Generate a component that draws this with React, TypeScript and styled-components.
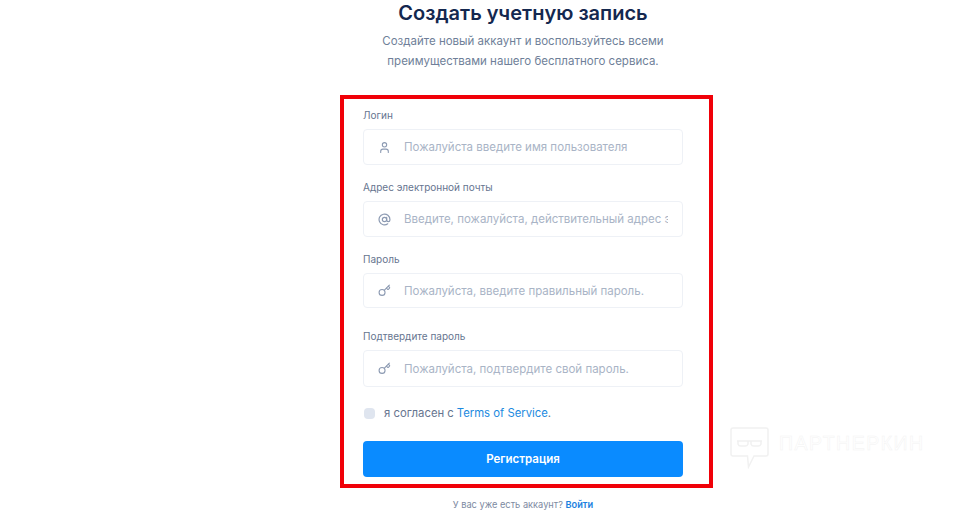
import React from 'react'
import styled, { createGlobalStyle } from 'styled-components'
import { AtSign, Key, User } from 'lucide-react'

const GlobalStyle = createGlobalStyle`
html, body {
  margin: 0;
  padding: 0;
  background: #ffffff;
}
body {
  font-family: "Inter", "Liberation Sans", sans-serif;
}
`;
const Page = styled.div`
position: relative;
width: 974px;
height: 520px;
overflow: hidden;
padding-left: 340px;
box-sizing: border-box;
`;
const Column = styled.div`
width: 373px;
`;
const Header = styled.div`
width: 366px;
text-align: center;
`;
const Title = styled.h1`
margin: 0;
font-size: 20px;
line-height: 26px;
font-weight: 600;
color: #14284f;
`;
const Subtitle = styled.p`
margin: 6px 0 0;
font-size: 11.5px;
line-height: 19.5px;
color: #6f7f99;
`;
const Frame = styled.form`
margin-top: 24px;
height: 393px;
box-sizing: border-box;
border: 4px solid #f00008;
padding: 9px 26px 0 19px;
`;
const Field = styled.div<{ $gap: number }>`
margin-bottom: ${(p) => p.$gap}px;
`;
const Label = styled.label`
display: block;
font-size: 10px;
line-height: 14px;
color: #66758f;
margin-bottom: 7px;
`;
const InputWrap = styled.div<{ $height: number }>`
display: flex;
align-items: center;
height: ${(p) => p.$height}px;
box-sizing: border-box;
border: 1px solid #eef1f6;
border-radius: 4px;
padding: 0 14px 0 14px;
`;
const IconSlot = styled.span`
display: flex;
width: 14px;
margin-right: 12px;
color: #8c9ab2;
`;
const TextInput = styled.input`
flex: 1;
min-width: 0;
border: 0;
padding: 0;
outline: none;
background: transparent;
font-family: inherit;
font-size: 11.5px;
&::placeholder {
  color: #a9b4c6;
  opacity: 1;
}
`;
const AgreeRow = styled.div`
display: flex;
align-items: center;
margin-bottom: 20px;
font-size: 11.3px;
line-height: 16px;
color: #66758f;
`;
const Check = styled.span`
width: 11px;
height: 11px;
margin: 0 9px 0 1px;
border-radius: 4px;
background: #dfe5ef;
`;
const Link = styled.a`
color: #1b8ae0;
margin-left: 3px;
`;
const Submit = styled.button`
display: block;
width: 100%;
height: 36px;
border: 0;
border-radius: 4px;
background: #0a8bff;
color: #ffffff;
font-family: inherit;
font-size: 11.5px;
font-weight: 600;
`;
const Footer = styled.p`
width: 366px;
margin: 10px 0 0;
text-align: center;
font-size: 9.25px;
line-height: 14px;
color: #7d8aa1;
`;
const SignIn = styled.a`
color: #1b7fe0;
font-weight: 600;
`;
const Watermark = styled.div`
position: absolute;
left: 730px;
top: 427px;
display: flex;
align-items: flex-start;
gap: 10px;
`;
const WatermarkText = styled.span`
margin-top: 6px;
font-family: "Liberation Sans", sans-serif;
font-size: 19.5px;
line-height: 20px;
letter-spacing: 1.5px;
color: #ffffff;
-webkit-text-stroke: 0.5px #f3f3f3;
`;

const Logo = () => (
  <svg width="39" height="42" viewBox="0 0 39 42" fill="none" stroke="#f1f1f1" strokeWidth="1.5">
    <path d="M3 1h33a2 2 0 0 1 2 2v24a2 2 0 0 1-2 2H24l-5.500 11-1-11H3a2 2 0 0 1-2-2V3a2 2 0 0 1 2-2z" />
    <path d="M7 14h25M8 14v3a3 3 0 0 0 3 2h4a3 3 0 0 0 3-2v-3M21 14v3a3 3 0 0 0 3 2h4a3 3 0 0 0 3-2v-3" />
  </svg>
)

const fields = [
  { label: 'Логин', placeholder: 'Пожалуйста введите имя пользователя', icon: <User size={13} strokeWidth={2} />, height: 36, gap: 15, type: 'text' },
  { label: 'Адрес электронной почты', placeholder: 'Введите, пожалуйста, действительный адрес электронной почты', icon: <AtSign size={13} strokeWidth={2.2} />, height: 36, gap: 15, type: 'email' },
  { label: 'Пароль', placeholder: 'Пожалуйста, введите правильный пароль.', icon: <Key size={13} strokeWidth={2} />, height: 35, gap: 21, type: 'password' },
  { label: 'Подтвердите пароль', placeholder: 'Пожалуйста, подтвердите свой пароль.', icon: <Key size={13} strokeWidth={2} />, height: 37, gap: 18, type: 'password' },
]

const App = () => {
  return (
    <Page>
      <GlobalStyle />
      <Column>
        <Header>
          <Title>Создать учетную запись</Title>
          <Subtitle>
            Создайте новый аккаунт и воспользуйтесь всеми
            <br />
            преимуществами нашего бесплатного сервиса.
          </Subtitle>
        </Header>
        <Frame>
          {fields.map((f) => (
            <Field key={f.label} $gap={f.gap}>
              <Label>{f.label}</Label>
              <InputWrap $height={f.height}>
                <IconSlot>{f.icon}</IconSlot>
                <TextInput type={f.type} placeholder={f.placeholder} />
              </InputWrap>
            </Field>
          ))}
          <AgreeRow>
            <Check />
            я согласен с <Link>Terms of Service</Link>.
          </AgreeRow>
          <Submit type="button">Регистрация</Submit>
        </Frame>
        <Footer>
          У вас уже есть аккаунт? <SignIn>Войти</SignIn>
        </Footer>
      </Column>
      <Watermark>
        <Logo />
        <WatermarkText>ПАРТНЕРКИН</WatermarkText>
      </Watermark>
    </Page>
  )
}

export default App
